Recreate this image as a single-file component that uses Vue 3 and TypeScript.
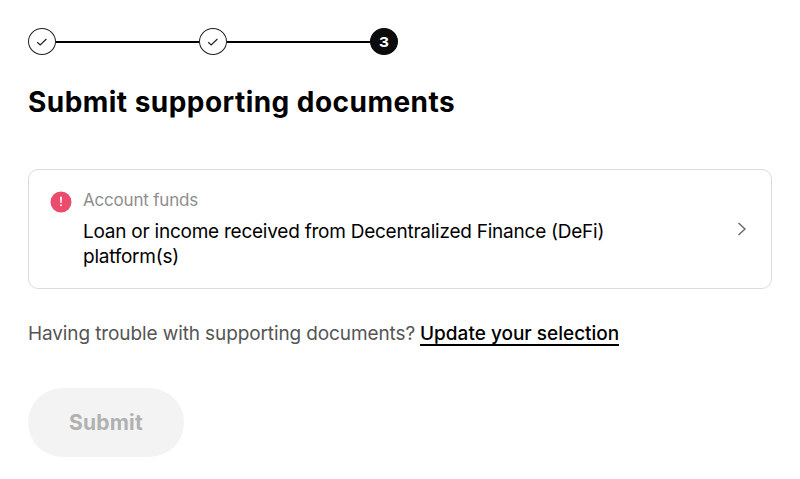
<script setup lang="ts">
interface Step { id: number; done: boolean }
const steps: Step[] = [
  { id: 1, done: true },
  { id: 2, done: true },
  { id: 3, done: false },
]
</script>

<template>
  <main class="page">
    <ol class="stepper">
      <li v-for="step in steps" :key="step.id" class="step" :class="{ current: !step.done }">
        <span class="dot">
          <svg v-if="step.done" width="12" height="10" viewBox="0 0 12 10" fill="none" stroke="#222" stroke-width="1.2">
            <path d="M1.2 5.2 4.2 8 10.4 2" />
          </svg>
          <span v-else class="number">{{ step.id }}</span>
        </span>
      </li>
    </ol>
    <h1>Submit supporting documents</h1>
    <section class="card">
      <svg class="alert" width="22" height="22" viewBox="0 0 22 22">
        <circle cx="11" cy="11" r="10.5" fill="#eb4b6d" />
        <path d="M10 5.8h2l-.4 6.2h-1.2z" fill="#fff" />
        <circle cx="11" cy="14.3" r="1" fill="#fff" />
      </svg>
      <div class="body">
        <p class="label">Account funds</p>
        <p class="text">Loan or income received from Decentralized Finance (DeFi)<br />platform(s)</p>
      </div>
      <svg class="chevron" width="10" height="16" viewBox="0 0 10 16" fill="none" stroke="#666" stroke-width="1.4">
        <path d="M1.5 2 8 8 1.5 14" />
      </svg>
    </section>
    <p class="help"><span class="question">Having trouble with supporting documents?</span><a class="link">Update your selection</a></p>
    <button class="submit" type="button" disabled>Submit</button>
  </main>
</template>

<style>
body { background: #fff; }
</style>
<style scoped>
.page { box-sizing: border-box; height: 479px; padding: 28px; font-family: Inter, "Liberation Sans", sans-serif; color: #000; }
.stepper { display: flex; list-style: none; margin: 0; padding: 0; width: 370px; height: 27px; }
.step { display: flex; align-items: center; flex: 1; }
.step.current { flex: none; }
.step:not(.current)::after { content: ""; flex: 1; height: 2px; background: #000; }
.dot { box-sizing: border-box; width: 28px; height: 27px; border: 1px solid #222; border-radius: 50%; display: flex; align-items: center; justify-content: center; }
.current .dot { background: #0c0c0c; border-color: #0c0c0c; color: #fff; }
.number { font-family: "Liberation Sans", sans-serif; font-size: 15px; font-weight: 700; line-height: 1; transform: scaleX(1.15); }
h1 { margin: 27px 0 0; font-size: 28px; line-height: 40px; font-weight: 700; letter-spacing: 0.46px; white-space: nowrap; }
.card { box-sizing: border-box; margin-top: 47px; height: 120px; border: 1px solid #dcdcdc; border-radius: 10px; padding: 17px 24px 0 21px; display: flex; white-space: nowrap; }
.alert { margin-top: 4px; flex: none; }
.body { margin-left: 11px; flex: 1; }
p { margin: 0; }
.label { color: #8e8e8e; font-size: 17px; line-height: 26px; letter-spacing: -0.2px; }
.text { margin-top: 6px; font-size: 19px; line-height: 25px; letter-spacing: -0.24px; }
.chevron { margin-top: 34px; flex: none; }
.help { margin-top: 32px; display: flex; gap: 5px; font-size: 19px; line-height: 26px; white-space: nowrap; }
.question { color: #555; letter-spacing: -0.11px; }
.link { border-bottom: 2px solid #000; height: 23px; line-height: 26px; font-weight: 500; }
.submit { display: flex; align-items: center; justify-content: center; margin-top: 41px; padding: 0; width: 156px; height: 69px; border: 0; border-radius: 35px; background: #f3f3f3; color: #b1b1b1; font: inherit; font-size: 21px; font-weight: 700; letter-spacing: 0.2px; }
</style>
